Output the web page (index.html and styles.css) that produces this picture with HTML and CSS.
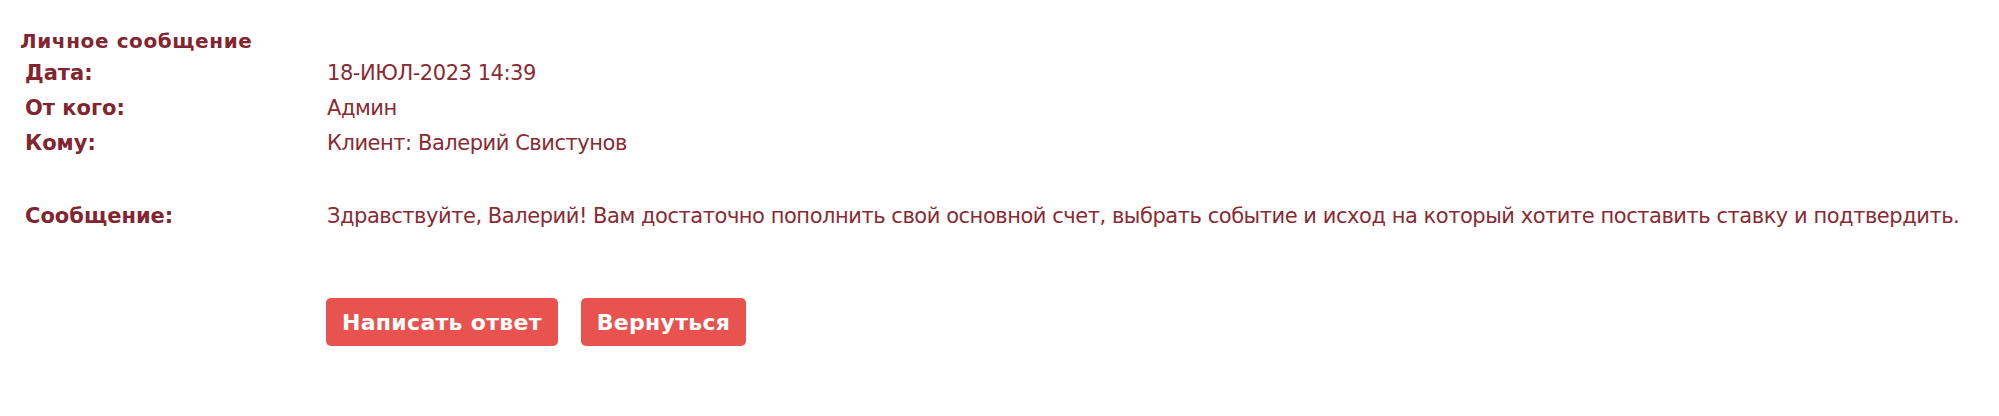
FILE: index.html
```html
<!DOCTYPE html>
<html lang="ru">
<head>
<meta charset="utf-8">
<title>Личное сообщение</title>
<link rel="stylesheet" href="styles.css">
</head>
<body>
<div class="page">
  <h1 class="title">Личное сообщение</h1>
  <div class="info">
    <div class="label">Дата:</div><div class="value">18-ИЮЛ-2023 14:39</div>
    <div class="label">От кого:</div><div class="value">Админ</div>
    <div class="label">Кому:</div><div class="value">Клиент: Валерий Свистунов</div>
  </div>
  <div class="info message">
    <div class="label">Сообщение:</div>
    <div class="value">Здравствуйте, Валерий! Вам достаточно пополнить свой основной счет, выбрать событие и исход на который хотите поставить ставку и подтвердить.</div>
  </div>
  <div class="actions">
    <button class="btn">Написать ответ</button>
    <button class="btn">Вернуться</button>
  </div>
</div>
</body>
</html>
```

FILE: styles.css
```css
html, body {
  margin: 0;
  padding: 0;
  background: #ffffff;
}
body {
  font-family: "DejaVu Sans", Verdana, sans-serif;
  color: #8a2a33;
}
.page {
  padding: 29px 0 0 20px;
}
.title {
  margin: 0;
  font-size: 20px;
  font-weight: bold;
  letter-spacing: 0.6px;
  line-height: 24px;
  color: #832530;
}
.info {
  display: grid;
  grid-template-columns: 302px auto;
  padding-left: 5px;
  margin-top: 3px;
  font-size: 21px;
  line-height: 35px;
}
.label {
  font-weight: bold;
  color: #832530;
}
.value {
  color: #8a2a33;
  letter-spacing: -0.46px;
}
.message {
  margin-top: 38px;
}
.actions {
  display: flex;
  gap: 23px;
  padding-left: 306px;
  margin-top: 64px;
}
.btn {
  font-family: "DejaVu Sans", Verdana, sans-serif;
  font-size: 22px;
  font-weight: bold;
  letter-spacing: 0.3px;
  color: #ffffff;
  background: #e8534f;
  border: none;
  border-radius: 5px;
  height: 48px;
  padding: 0 16px;
  cursor: pointer;
}
```
